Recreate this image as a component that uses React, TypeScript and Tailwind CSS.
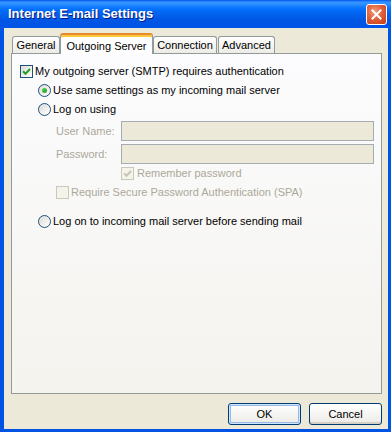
import React from 'react'

const font = "font-['Tahoma','Liberation_Sans',sans-serif]"

const CheckBox = ({ checked, disabled }: { checked?: boolean; disabled?: boolean }) => (
  <span
    className={`flex h-[13px] w-[13px] shrink-0 items-center justify-center border ${
      disabled ? 'border-[#CAC8BB] bg-[#F5F4EA]' : 'border-[#1C5180] bg-gradient-to-br from-[#DCDBD5] to-white'
    }`}
  >
    {checked && (
      <svg width="9" height="9" viewBox="0 0 9 9">
        <path
          d="M1 4.2 L3.5 6.7 L8 2"
          fill="none"
          stroke={disabled ? '#C8C5B5' : '#21A121'}
          strokeWidth="2"
        />
      </svg>
    )}
  </span>
)

const Radio = ({ checked }: { checked?: boolean }) => (
  <span className="flex h-[13px] w-[13px] shrink-0 items-center justify-center rounded-full border border-[#1C5180] bg-gradient-to-br from-[#DCDBD5] to-white">
    {checked && <span className="h-[5px] w-[5px] rounded-full bg-gradient-to-br from-[#55D551] to-[#219B21]" />}
  </span>
)

const Tab = ({ label, active, w }: { label: string; active?: boolean; w: string }) =>
  active ? (
    <div className={`relative z-10 -mb-px flex h-[21px] items-start justify-center rounded-t-[3px] border-x border-t-2 border-[#919B9C] border-t-[#E68B2C] bg-white pt-[3px] shadow-[inset_0_2px_0_#FFC73C] ${w}`}>
      {label}
    </div>
  ) : (
    <div className={`flex h-[17px] items-center justify-center rounded-t-[3px] border-x border-t border-[#919B9C] bg-gradient-to-b from-white to-[#ECEBE6] ${w}`}>
      {label}
    </div>
  )

const Field = ({ label }: { label: string }) => (
  <div className="flex h-[20px] items-center pl-[44px]">
    <span className="w-[65px] text-[#ACA899]">{label}</span>
    <div className="h-[20px] w-[253px] border border-[#A5ACB2] bg-[#ECE9D8]" />
  </div>
)

const Button = ({ label, primary }: { label: string; primary?: boolean }) => (
  <button
    className={`h-[22px] w-[73px] rounded-[3px] border border-[#003C74] bg-gradient-to-b from-white to-[#ECEBE6] text-black ${
      primary ? 'shadow-[inset_0_0_0_1px_#CEE7FF,inset_0_0_0_2px_#98B8EA]' : 'shadow-[inset_0_-2px_0_#D6D0C5]'
    }`}
  >
    {label}
  </button>
)

export default function App() {
  return (
    <div className={`flex h-[432px] w-[391px] flex-col overflow-hidden bg-[#0054E3] text-[11px] text-black ${font}`}>
      {/* title bar */}
      <div className="flex h-[28px] shrink-0 items-center justify-between bg-[linear-gradient(to_bottom,#0058EE_0%,#3A93FF_8%,#288EFF_16%,#127DFF_24%,#036FFC_34%,#0262EE_50%,#0057E5_72%,#0054E3_88%,#0055EB_100%)] pl-[8px] pr-[4px]">
        <span className="font-['Trebuchet_MS','Liberation_Sans',sans-serif] text-[13px] font-bold text-white [text-shadow:1px_1px_#0A1883]">
          Internet E-mail Settings
        </span>
        <div className="flex h-[21px] w-[21px] items-center justify-center rounded-[3px] border border-white bg-[radial-gradient(circle_at_40%_35%,#F0A080_0%,#E2613B_45%,#C33A16_100%)]">
          <svg width="11" height="11" viewBox="0 0 11 11">
            <path d="M1.5 1.5 L9.5 9.5 M9.5 1.5 L1.5 9.5" stroke="white" strokeWidth="2" strokeLinecap="square" />
          </svg>
        </div>
      </div>

      {/* body */}
      <div className="mb-[3px] ml-[4px] mr-[3px] flex flex-1 flex-col bg-[#ECE9D8] pl-[7px] pr-[6px] pt-[5px]">
        <div className="flex h-[20px] items-end pl-[1px]">
          <Tab label="General" w="w-[48px]" />
          <Tab label="Outgoing Server" active w="w-[93px]" />
          <Tab label="Connection" w="w-[64px]" />
          <div className="w-[1px]" />
          <Tab label="Advanced" w="w-[57px]" />
        </div>

        <div className="flex h-[341px] flex-col border border-[#919B9C] bg-gradient-to-b from-[#FCFCFE] to-[#F4F3EE] pt-[8px]">
          <label className="flex h-[19px] items-center gap-[2px] pl-[8px]">
            <CheckBox checked />
            <span>My outgoing server (SMTP) requires authentication</span>
          </label>
          <label className="flex h-[19px] items-center gap-[2px] pl-[26px]">
            <Radio checked />
            <span>Use same settings as my incoming mail server</span>
          </label>
          <label className="flex h-[19px] items-center gap-[2px] pl-[26px]">
            <Radio />
            <span>Log on using</span>
          </label>
          <div className="mt-[2px] flex flex-col gap-[3px]">
            <Field label="User Name:" />
            <Field label="Password:" />
          </div>
          <div className="flex h-[19px] items-center gap-[3px] pl-[109px]">
            <CheckBox checked disabled />
            <span className="text-[#ACA899]">Remember password</span>
          </div>
          <div className="flex h-[19px] items-center gap-[2px] pl-[44px]">
            <CheckBox disabled />
            <span className="text-[#ACA899]">Require Secure Password Authentication (SPA)</span>
          </div>
          <label className="mt-[10px] flex h-[19px] items-center gap-[2px] pl-[26px]">
            <Radio />
            <span>Log on to incoming mail server before sending mail</span>
          </label>
        </div>

        <div className="mt-[9px] flex justify-end gap-[8px]">
          <Button label="OK" primary />
          <Button label="Cancel" />
        </div>
      </div>
    </div>
  )
}
